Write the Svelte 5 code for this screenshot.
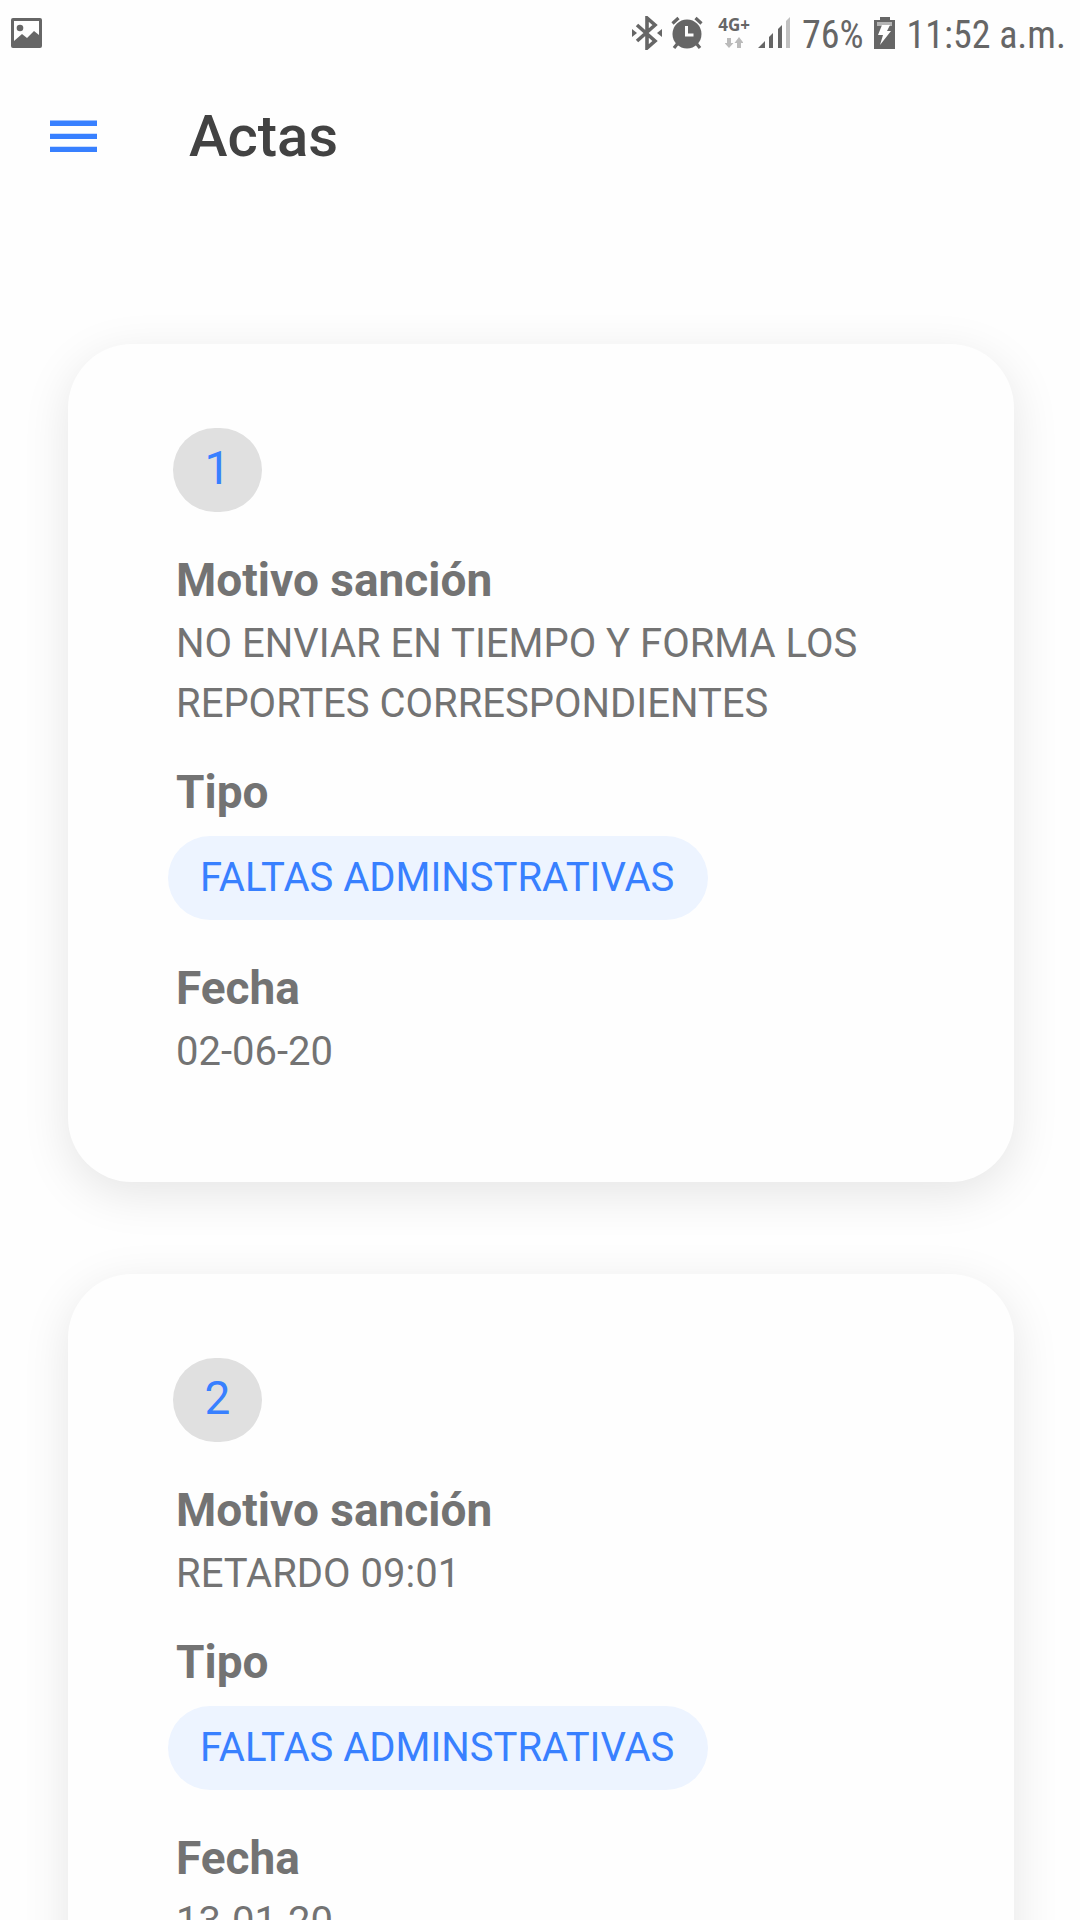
<script lang="ts">
	type Acta = {
		id: number;
		motivo: string;
		tipo: string;
		fecha: string;
	};

	let menuOpen = $state(false);
	let actas = $state<Acta[]>([
		{
			id: 1,
			motivo: 'NO ENVIAR EN TIEMPO Y FORMA LOS REPORTES CORRESPONDIENTES',
			tipo: 'FALTAS ADMINSTRATIVAS',
			fecha: '02-06-20'
		},
		{
			id: 2,
			motivo: 'RETARDO 09:01',
			tipo: 'FALTAS ADMINSTRATIVAS',
			fecha: '13-01-20'
		}
	]);
</script>

<div class="app">
	<div class="status">
		<svg width="31" height="30" viewBox="0 0 31 30">
			<path
				fill-rule="evenodd"
				d="M2 0h27a2 2 0 0 1 2 2v26a2 2 0 0 1-2 2H2a2 2 0 0 1-2-2V2a2 2 0 0 1 2-2zM3 3v20l8-7 5 4 7-7 5 4V3z"
			/>
			<circle cx="9" cy="10" r="3.3" />
		</svg>

		<div class="right">
			<svg width="30" height="34" viewBox="0 0 30 34">
				<path d="M5 9l18 16-8 7V2l8 7L5 25" fill="none" stroke="currentColor" stroke-width="3.6" />
				<path d="M0 13l5 4-5 4zM30 13l-5 4 5 4z" />
			</svg>
			<svg class="alarm" width="32" height="34" viewBox="0 0 32 34">
				<circle cx="16" cy="18" r="14.5" />
				<path
					d="M1.5 7.5l6-5.500M30.500 7.500l-6-5.500M7 27l-4 5M25 27l4 5"
					stroke="currentColor"
					stroke-width="3.2"
				/>
				<path d="M15.500 10v9h7" fill="none" stroke="#fefefe" stroke-width="3" />
			</svg>
			<div class="network">
				<span>4G+</span>
				<svg width="18" height="12" viewBox="0 0 18 12">
					<path d="M2 1h4v5h2.500L4 11 -.5 6H2zM12 11h4V6h2.500L14 0 9.500 6H12z" />
				</svg>
			</div>
			<svg class="signal" width="32" height="32" viewBox="0 0 32 32">
				<path d="M0 31l7-7v7zM11 20l4-4v15h-4zM20 12l4-4v23h-4z" />
				<path d="M28 4l4-4v31h-4z" opacity="0.4" />
			</svg>
			<span class="percent">76%</span>
			<svg class="battery" width="21" height="32" viewBox="0 0 21 32">
				<path d="M6 0h10v3h5v29H0V3h6z" />
				<path d="M3 5h15v4H3z" fill="#b4b4b4" />
				<path d="M8 8h8l-3 6h4L6 28l3-10H4z" fill="#fefefe" />
			</svg>
			<time>11:52 a.m.</time>
		</div>
	</div>

	<header>
		<button aria-label="Menú" aria-expanded={menuOpen} onclick={() => (menuOpen = !menuOpen)}>
			<svg width="48" height="32" viewBox="0 0 48 32">
				<path d="M0 .5h47V6H0zM0 13.700h47V19H0zM0 26.800h47V32H0z" />
			</svg>
		</button>
		<h1>Actas</h1>
	</header>

	<main>
		{#each actas as acta (acta.id)}
			<article>
				<span class="badge">{acta.id}</span>
				<h2>Motivo sanción</h2>
				<p>{acta.motivo}</p>
				<h2 class="tipo">Tipo</h2>
				<span class="chip">{acta.tipo}</span>
				<h2>Fecha</h2>
				<p>{acta.fecha}</p>
			</article>
		{/each}
	</main>
</div>

<style>
	:global(body) {
		margin: 0;
		background: #fefefe;
	}

	.app {
		height: 100vh;
		overflow-y: auto;
		scrollbar-width: none;
		color: #737373;
		font-family: Roboto, sans-serif;
	}

	svg {
		display: block;
		flex-shrink: 0;
		fill: currentColor;
	}

	.status {
		display: flex;
		align-items: center;
		justify-content: space-between;
		height: 66px;
		padding: 0 14px 0 11px;
		color: #666;
	}

	.right {
		display: flex;
		align-items: center;
		font-family: 'Roboto Condensed', 'Liberation Sans Narrow', Roboto, sans-serif;
		font-size: 38px;
		white-space: nowrap;
	}

	.alarm {
		margin-left: 9px;
	}

	.network {
		display: flex;
		flex-direction: column;
		align-items: center;
		gap: 4px;
		margin: 0 8px 0 15px;
		font-family: 'Open Sans', sans-serif;
		font-size: 17px;
		font-weight: 700;
		line-height: 16px;
		& svg {
			color: #bbb;
		}
	}

	.percent,
	time {
		padding-top: 4px;
	}

	.percent {
		margin: 0 10px 0 12px;
	}

	.battery {
		margin-right: 12px;
	}

	header {
		display: flex;
		align-items: center;
		gap: 77px;
		height: 140px;
		padding: 0 36px;
	}

	button {
		padding: 14px;
		border: none;
		background: none;
		color: #3880ff;
		cursor: pointer;
	}

	h1 {
		margin: 0;
		color: #424242;
		font-size: 58px;
		font-weight: 500;
	}

	main {
		display: flex;
		flex-direction: column;
		gap: 92px;
		padding: 138px 66px 92px 68px;
	}

	article {
		padding: 84px 108px 100px;
		border-radius: 64px;
		background: #fefefe;
		box-shadow: 0 12px 48px rgba(0, 0, 0, 0.1);
	}

	.badge {
		display: block;
		width: 89px;
		height: 84px;
		margin-left: -3px;
		border-radius: 42px;
		background: #e0e0e0;
		color: #3880ff;
		font-size: 46px;
		line-height: 80px;
		text-align: center;
	}

	h2 {
		margin: 35px 0 1px;
		font-size: 46px;
		font-weight: 700;
		line-height: 66px;
	}

	.tipo {
		margin-top: 25px;
	}

	p {
		margin: 0;
		font-size: 40px;
		line-height: 60px;
	}

	.chip {
		display: block;
		width: fit-content;
		margin: 11px 0 0 -8px;
		padding: 0 34px 0 32px;
		border-radius: 42px;
		background: #edf4ff;
		color: #3880ff;
		font-size: 40px;
		line-height: 84px;
	}
</style>
